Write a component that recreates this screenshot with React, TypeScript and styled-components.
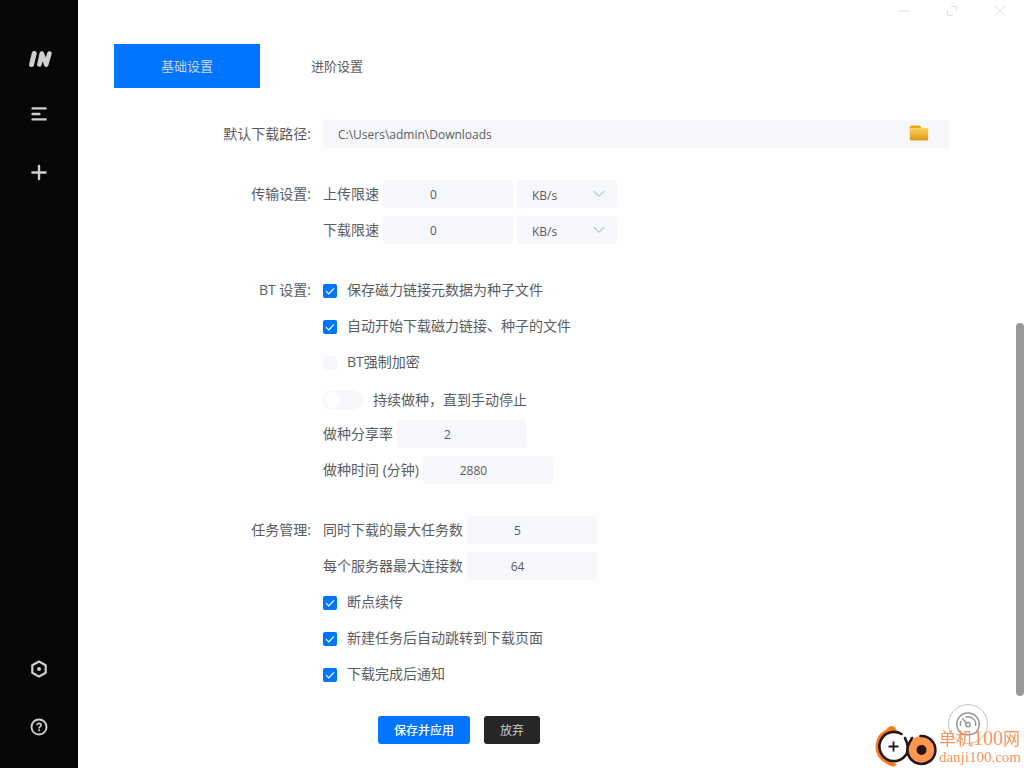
import React from "react";
import styled, { createGlobalStyle } from "styled-components";

const GlobalStyle = createGlobalStyle`
  *, *::before, *::after { box-sizing: border-box; }
  body {
    margin: 0;
    background: #fff;
    color: #5a5c60;
    font-family: "Open Sans", "Noto Sans CJK SC", sans-serif;
    font-size: 14px;
  }
  button, input, select { font: inherit; color: inherit; margin: 0; }
`;

const Shell = styled.div`
  position: relative;
  display: flex;
  min-height: 100vh;
`;

const Sidebar = styled.nav`
  display: flex;
  flex-direction: column;
  flex: 0 0 78px;
  padding: 33px 0 12px;
  background: #060606;
  color: #cfcfcf;
`;

const Logo = styled.div`
  display: flex;
  align-items: center;
  justify-content: center;
  height: 52px;
`;

const NavButton = styled.button<{ $pushDown?: boolean }>`
  display: flex;
  align-items: center;
  justify-content: center;
  height: 58px;
  padding: 0;
  border: 0;
  background: none;
  margin-top: ${(p) => (p.$pushDown ? "auto" : "0")};
`;

const Main = styled.main`
  flex: 1;
  min-width: 0;
`;

const TitleBar = styled.header`
  display: flex;
  justify-content: flex-end;
  height: 22px;
`;

const WindowButton = styled.button`
  display: flex;
  align-items: center;
  justify-content: center;
  width: 48px;
  padding: 0;
  border: 0;
  background: none;
  color: #dfdfdf;
`;

const Content = styled.div`
  padding: 22px 74px 24px 36px;
`;

const Tabs = styled.div`
  display: flex;
  gap: 4px;
  margin-bottom: 32px;
`;

const Tab = styled.button<{ $active?: boolean }>`
  width: 146px;
  height: 44px;
  padding: 0 0 2px;
  border: 0;
  font-size: 13px;
  background: ${(p) => (p.$active ? "#0075ff" : "transparent")};
  color: ${(p) => (p.$active ? "#ccd3dd" : "#5a5c60")};
`;

const Form = styled.form`
  display: flex;
  flex-direction: column;
  gap: 32px;
`;

const Group = styled.div`
  display: grid;
  grid-template-columns: minmax(0, 1fr) minmax(0, 3fr);
`;

const GroupLabel = styled.div`
  padding-right: 12px;
  line-height: 28px;
  text-align: right;
`;

const Rows = styled.div`
  display: flex;
  flex-direction: column;
  gap: 8px;
`;

const Row = styled.div`
  display: flex;
  align-items: center;
  gap: 4px;
  height: 28px;
  line-height: 28px;
`;

const CheckLabel = styled.label`
  display: flex;
  align-items: center;
  gap: 10px;
  height: 28px;
  line-height: 28px;
`;

const SwitchLabel = styled(CheckLabel)`
  align-items: flex-end;
  line-height: 20px;
  padding-bottom: 2px;
`;

const CheckBox = styled.input`
  appearance: none;
  width: 14px;
  height: 14px;
  margin: 2px 0 0;
  border-radius: 2px;
  background: #f5f7fa;
  &:checked {
    background: #0075ff
      url("data:image/svg+xml,%3Csvg xmlns='http://www.w3.org/2000/svg' viewBox='0 0 14 14'%3E%3Cpath d='M3 7.2 5.8 10 11 4.4' fill='none' stroke='white' stroke-width='1.2'/%3E%3C/svg%3E")
      center / 14px 14px no-repeat;
  }
`;

const Switch = styled.input`
  appearance: none;
  width: 40px;
  height: 20px;
  padding: 2px;
  border-radius: 10px;
  background: #f5f7fa;
  &::before {
    content: "";
    display: block;
    width: 16px;
    height: 16px;
    border-radius: 50%;
    background: #fff;
  }
  &:checked { background: #0075ff; }
  &:checked::before { margin-left: auto; }
`;

const PathBox = styled.div`
  display: flex;
  height: 28px;
  border-radius: 4px;
  background: #f5f7fa;
`;

const PathInput = styled.input`
  flex: 1;
  min-width: 0;
  padding: 0 15px;
  border: 0;
  background: none;
  font-size: 12px;
`;

const FolderButton = styled.button`
  display: flex;
  align-items: center;
  justify-content: center;
  width: 62px;
  padding: 0 0 2px;
  border: 0;
  background: none;
`;

const NumberInput = styled.input`
  width: 130px;
  height: 28px;
  padding: 2px 44px 0 15px;
  border: 0;
  border-radius: 4px;
  background: #f5f7fa;
  font-size: 12px;
  text-align: center;
`;

const UnitSelect = styled.select`
  appearance: none;
  width: 100px;
  height: 28px;
  padding: 2px 30px 0 15px;
  border: 0;
  border-radius: 4px;
  background: #f5f7fa
    url("data:image/svg+xml,%3Csvg xmlns='http://www.w3.org/2000/svg' viewBox='0 0 12 8'%3E%3Cpath d='M.8 1 6 6.2 11.2 1' fill='none' stroke='%23c0c4cc' stroke-width='1.1'/%3E%3C/svg%3E")
    right 12px center / 12px 8px no-repeat;
  font-size: 12px;
`;

const Actions = styled.div`
  display: flex;
  gap: 14px;
  margin-top: -4px;
  padding-left: calc(25% + 55px);
`;

const ActionButton = styled.button<{ $primary?: boolean }>`
  height: 28px;
  padding: 0 16px;
  border: 0;
  border-radius: 3px;
  font-size: 12px;
  font-weight: ${(p) => (p.$primary ? 500 : 400)};
  background: ${(p) => (p.$primary ? "#0075ff" : "#262626")};
  color: ${(p) => (p.$primary ? "#fff" : "#ccc")};
`;

const ScrollThumb = styled.div`
  position: absolute;
  top: 323px;
  right: 0;
  width: 8px;
  height: 373px;
  border-radius: 4px;
  background: #999;
`;

const SpeedButton = styled.button`
  position: fixed;
  right: 36px;
  bottom: 24px;
  display: flex;
  align-items: center;
  justify-content: center;
  width: 40px;
  height: 40px;
  padding: 0;
  border: 1px solid #c4c4c4;
  border-radius: 50%;
  background: #fff;
  color: #929292;
`;

const SiteMark = styled.div`
  position: fixed;
  right: 3px;
  bottom: 0;
  display: flex;
  align-items: flex-end;
  color: #ff9458;
`;

const SiteText = styled.div`
  padding-bottom: 2px;
  font-family: "Liberation Serif", "Noto Sans CJK SC", serif;
  white-space: nowrap;
`;

const SiteName = styled.div`
  font-size: 17px;
  line-height: 18px;
`;

const SiteDigits = styled.span`
  font-size: 20px;
`;

const SiteUrl = styled.div`
  font-size: 15px;
  line-height: 17px;
`;

function NumberRow({ label, value, unit }: { label: string; value: string; unit?: boolean }) {
  const id = React.useId();
  return (
    <Row>
      <label htmlFor={id}>{label}</label>
      <NumberInput id={id} type="text" inputMode="numeric" defaultValue={value} />
      {unit && (
        <UnitSelect aria-label={label + "单位"} defaultValue="KB/s">
          <option>KB/s</option>
          <option>MB/s</option>
        </UnitSelect>
      )}
    </Row>
  );
}

function CheckRow({ label, checked }: { label: string; checked?: boolean }) {
  return (
    <CheckLabel>
      <CheckBox type="checkbox" defaultChecked={checked} />
      {label}
    </CheckLabel>
  );
}

export default function App() {
  return (
    <>
      <GlobalStyle />
      <Shell>
        <Sidebar>
          <Logo>
            <svg width="26" height="18" viewBox="0 0 26 18" fill="none" stroke="#cfcfcf" strokeLinecap="round" strokeLinejoin="round">
              <path d="M8.200 3.500 5.600 14.500" strokeWidth="5" />
              <path d="M13.400 14.500 15.800 3.500 20.200 14.500 23.400 3.500" strokeWidth="4.600" />
            </svg>
          </Logo>
          <NavButton aria-label="任务列表">
            <svg width="16" height="16" viewBox="0 0 16 16" fill="none" stroke="currentColor" strokeWidth="2.4" strokeLinecap="round">
              <path d="M1.6 2.4H14.6M1.6 8H8.4M1.6 13.4H14.6" />
            </svg>
          </NavButton>
          <NavButton aria-label="新建任务">
            <svg width="16" height="18" viewBox="0 0 16 18" fill="none" stroke="currentColor" strokeWidth="2.4" strokeLinecap="round">
              <path d="M8 3V16M1.4 9.5H14.6" />
            </svg>
          </NavButton>
          <NavButton aria-label="设置" $pushDown>
            <svg width="18" height="18" viewBox="0 0 18 18" fill="none" stroke="currentColor" strokeWidth="2.2">
              <path d="M9 1.5 15.7 5.3V12.8L9 16.6 2.3 12.8V5.3Z" strokeLinejoin="round" />
              <circle cx="9" cy="9" r="2" fill="currentColor" stroke="none" />
            </svg>
          </NavButton>
          <NavButton aria-label="帮助">
            <svg width="18" height="18" viewBox="0 0 18 18" fill="none" stroke="currentColor">
              <circle cx="9" cy="9" r="7.5" strokeWidth="1.9" />
              <path d="M7 7.3C7 4.6 11.100 4.8 11.100 7.2 11.100 8.7 9.1 8.7 9.1 10.4" strokeWidth="1.6" />
              <circle cx="9.1" cy="12.3" r="1" fill="currentColor" stroke="none" />
            </svg>
          </NavButton>
        </Sidebar>

        <Main>
          <TitleBar>
            <WindowButton aria-label="最小化">
              <svg width="12" height="12" viewBox="0 0 12 12" stroke="currentColor"><path d="M.5 6H11.5" strokeWidth="1.2" opacity=".8" /></svg>
            </WindowButton>
            <WindowButton aria-label="最大化">
              <svg width="12" height="12" viewBox="0 0 12 12" fill="none" stroke="currentColor"><path d="M5 1.5H10.5V6M1.5 5.5V10.5H6.5" /></svg>
            </WindowButton>
            <WindowButton aria-label="关闭">
              <svg width="12" height="12" viewBox="0 0 12 12" stroke="currentColor"><path d="M1 1 11 11M11 1 1 11" /></svg>
            </WindowButton>
          </TitleBar>

          <Content>
            <Tabs role="tablist">
              <Tab role="tab" aria-selected="true" $active>基础设置</Tab>
              <Tab role="tab" aria-selected="false">进阶设置</Tab>
            </Tabs>

            <Form onSubmit={(e) => e.preventDefault()}>
              <Group>
                <GroupLabel as="label" htmlFor="download-path">默认下载路径:</GroupLabel>
                <PathBox>
                  <PathInput id="download-path" type="text" defaultValue={"C:\\Users\\admin\\Downloads"} />
                  <FolderButton type="button" aria-label="选择文件夹">
                    <svg width="20" height="16" viewBox="0 0 20 16">
                      <defs>
                        <linearGradient id="folder" x1="0" y1="0" x2="0" y2="1">
                          <stop offset="0" stopColor="#fbd161" />
                          <stop offset="1" stopColor="#df9a10" />
                        </linearGradient>
                      </defs>
                      <path d="M.8 2.2Q.8.5 2.5.5H10Q11.6.5 11.9 2.2L12.4 5H.8Z" fill="#eda60f" />
                      <rect x=".8" y="3" width="18.4" height="12.6" rx="1.6" fill="url(#folder)" />
                    </svg>
                  </FolderButton>
                </PathBox>
              </Group>

              <Group>
                <GroupLabel>传输设置:</GroupLabel>
                <Rows>
                  <NumberRow label="上传限速" value="0" unit />
                  <NumberRow label="下载限速" value="0" unit />
                </Rows>
              </Group>

              <Group>
                <GroupLabel>BT 设置:</GroupLabel>
                <Rows>
                  <CheckRow label="保存磁力链接元数据为种子文件" checked />
                  <CheckRow label="自动开始下载磁力链接、种子的文件" checked />
                  <CheckRow label="BT强制加密" />
                  <SwitchLabel>
                    <Switch type="checkbox" role="switch" />
                    持续做种，直到手动停止
                  </SwitchLabel>
                  <NumberRow label="做种分享率" value="2" />
                  <NumberRow label="做种时间 (分钟)" value="2880" />
                </Rows>
              </Group>

              <Group>
                <GroupLabel>任务管理:</GroupLabel>
                <Rows>
                  <NumberRow label="同时下载的最大任务数" value="5" />
                  <NumberRow label="每个服务器最大连接数" value="64" />
                  <CheckRow label="断点续传" checked />
                  <CheckRow label="新建任务后自动跳转到下载页面" checked />
                  <CheckRow label="下载完成后通知" checked />
                </Rows>
              </Group>

              <Actions>
                <ActionButton type="submit" $primary>保存并应用</ActionButton>
                <ActionButton type="button">放弃</ActionButton>
              </Actions>
            </Form>
          </Content>
        </Main>
        <ScrollThumb />
      </Shell>

      <SpeedButton aria-label="限速">
        <svg width="26" height="26" viewBox="0 0 26 26" fill="none" stroke="currentColor" strokeWidth="1.4" strokeLinecap="round">
          <path d="M7 22.6A11.2 11.2 0 1 1 19 22.6Q13 25 7 22.6Z" />
          <path d="M5.400 14.500A7.800 7.800 0 0 1 5.900 10.400M10.600 6.100A7.800 7.800 0 0 1 20.700 14.500M7.600 7.800 11.600 12.200" />
          <circle cx="13" cy="13.6" r="2.2" />
        </svg>
      </SpeedButton>
      <SiteMark>
        <svg width="64" height="44" viewBox="0 0 64 44" fill="none">
          <path d="M22 7Q19 0 14 3 11 6 6 9 1 14 .5 23 .5 34 12 40 19 45 22 40 6 36 6 22 7 10 22 7Z" fill="#ff7a1a" />
          <path d="M26.500 10A14.600 14.600 0 1 0 31.500 30Q34 26 32 19L30 14" fill="#fff" stroke="#231815" strokeWidth="2.600" strokeLinecap="round" />
          <path d="M18.500 17.500V27.500M13.500 22.500H23.500" stroke="#231815" strokeWidth="1.800" />
          <circle cx="46.500" cy="26" r="14" fill="#ff9550" />
          <path d="M45.500 12A14 14 0 1 1 34 19.500L37 14" stroke="#231815" strokeWidth="2.600" strokeLinecap="round" />
          <circle cx="46.500" cy="26" r="5" fill="#231815" />
        </svg>
        <SiteText>
          <SiteName>单机<SiteDigits>100</SiteDigits>网</SiteName>
          <SiteUrl>danji100.com</SiteUrl>
        </SiteText>
      </SiteMark>
    </>
  );
}
